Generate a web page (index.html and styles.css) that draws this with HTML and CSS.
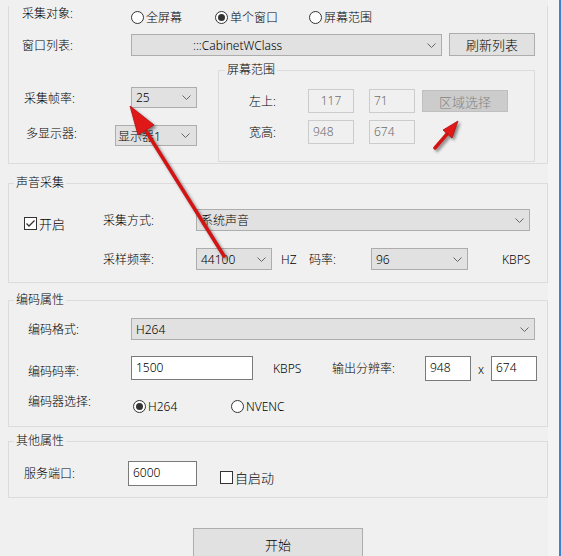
FILE: index.html
```html
<!DOCTYPE html>
<html lang="zh-CN">
<head>
  <meta charset="UTF-8" />
  <title>采集设置</title>
  <link rel="stylesheet" href="styles.css">
</head>
<body>
  <div class="page">
    <div class="main">

      <!-- 视频采集 -->
      <div class="panel-top">
        <div class="row row-target">
          <span class="label label-target">采集对象:</span>
          <span class="opt opt-full"><span class="radio"></span>全屏幕</span>
          <span class="opt opt-window"><span class="radio checked"></span>单个窗口</span>
          <span class="opt"><span class="radio"></span>屏幕范围</span>
        </div>

        <div class="row row-list">
          <span class="label label-list">窗口列表:</span>
          <div class="combo combo-window">
            <span class="combo-text">:::CabinetWClass</span>
            <svg class="chev" viewBox="0 0 9 5"><path d="M0.5 0.5 L4.5 4.5 L8.5 0.5"/></svg>
          </div>
          <button class="btn btn-refresh">刷新列表</button>
        </div>

        <div class="lower">
          <div class="left-col">
            <div class="row row-fps">
              <span class="label label-fps">采集帧率:</span>
              <div class="combo combo-fps">
                <span class="combo-text">25</span>
                <svg class="chev" viewBox="0 0 9 5"><path d="M0.5 0.5 L4.5 4.5 L8.5 0.5"/></svg>
              </div>
            </div>
            <div class="row row-monitor">
              <span class="label label-monitor">多显示器:</span>
              <div class="combo combo-monitor">
                <span class="combo-text">显示器1</span>
                <svg class="chev" viewBox="0 0 9 5"><path d="M0.5 0.5 L4.5 4.5 L8.5 0.5"/></svg>
              </div>
            </div>
          </div>

          <fieldset class="group group-range">
            <legend>屏幕范围</legend>
            <div class="row row-pos">
              <span class="label label-range">左上:</span>
              <span class="field disabled field-center">117</span>
              <span class="field disabled field-gap">71</span>
              <button class="btn btn-disabled">区域选择</button>
            </div>
            <div class="row row-size">
              <span class="label label-range">宽高:</span>
              <span class="field disabled">948</span>
              <span class="field disabled field-gap">674</span>
            </div>
          </fieldset>
        </div>
      </div>

      <!-- 声音采集 -->
      <fieldset class="group group-audio">
        <legend>声音采集</legend>
        <div class="row row-audio1">
          <span class="check-item check-enable">
            <span class="checkbox">
              <svg viewBox="0 0 11 11"><path d="M1.5 5.5 L4 8 L9.5 2.5"/></svg>
            </span>开启
          </span>
          <span class="label label-audio">采集方式:</span>
          <div class="combo combo-source">
            <span class="combo-text">系统声音</span>
            <svg class="chev" viewBox="0 0 9 5"><path d="M0.5 0.5 L4.5 4.5 L8.5 0.5"/></svg>
          </div>
        </div>
        <div class="row row-audio2">
          <span class="label label-audio label-indent">采样频率:</span>
          <div class="combo combo-rate">
            <span class="combo-text">44100</span>
            <svg class="chev" viewBox="0 0 9 5"><path d="M0.5 0.5 L4.5 4.5 L8.5 0.5"/></svg>
          </div>
          <span class="unit unit-hz">HZ</span>
          <span class="label label-bitrate">码率:</span>
          <div class="combo combo-bitrate">
            <span class="combo-text">96</span>
            <svg class="chev" viewBox="0 0 9 5"><path d="M0.5 0.5 L4.5 4.5 L8.5 0.5"/></svg>
          </div>
          <span class="unit unit-kbps">KBPS</span>
        </div>
      </fieldset>

      <!-- 编码属性 -->
      <fieldset class="group group-encode">
        <legend>编码属性</legend>
        <div class="row row-enc1">
          <span class="label label-enc">编码格式:</span>
          <div class="combo combo-format">
            <span class="combo-text">H264</span>
            <svg class="chev" viewBox="0 0 9 5"><path d="M0.5 0.5 L4.5 4.5 L8.5 0.5"/></svg>
          </div>
        </div>
        <div class="row row-enc2">
          <span class="label label-enc label-low">编码码率:</span>
          <span class="field field-bitrate">1500</span>
          <span class="unit unit-enc">KBPS</span>
          <span class="label label-res">输出分辨率:</span>
          <span class="field field-res">948</span>
          <span class="times">x</span>
          <span class="field field-res">674</span>
        </div>
        <div class="row row-enc3">
          <span class="label label-enc label-high">编码器选择:</span>
          <span class="opt opt-h264"><span class="radio checked"></span>H264</span>
          <span class="opt"><span class="radio"></span>NVENC</span>
        </div>
      </fieldset>

      <!-- 其他属性 -->
      <fieldset class="group group-other">
        <legend>其他属性</legend>
        <div class="row row-other">
          <span class="label label-port">服务端口:</span>
          <span class="field field-port">6000</span>
          <span class="check-item check-auto"><span class="checkbox"></span>自启动</span>
        </div>
      </fieldset>

      <button class="btn btn-start">开始</button>
    </div>
    <div class="edge"></div>
  </div>

  <!-- 标注箭头 -->
  <svg class="arrows" viewBox="0 0 561 556">
    <g class="arrow">
      <line x1="224" y1="256" x2="146" y2="131" />
      <polygon points="130,106 154,125 138,135" />
    </g>
    <g class="arrow">
      <line x1="435" y1="148" x2="448" y2="133" />
      <polygon points="458,121 452,138 443,130" />
    </g>
  </svg>
</body>
</html>
```

FILE: styles.css
```css
body {
  margin: 0;
  background: #f0f0f0;
  font-family: "Noto Sans", "Noto Sans CJK SC", sans-serif;
  font-size: 12px;
  font-weight: 300;
  color: #000;
  overflow: hidden;
}

.page {
  display: flex;
  width: 561px;
  height: 556px;
  overflow: hidden;
}

.main {
  width: 540px;
  padding-left: 8px;
  flex-shrink: 0;
}

.edge {
  flex: 1;
  background: #f4f4f4;
  border-right: 2px solid #3b84d4;
}

/* rows and labels */

.row {
  display: flex;
  align-items: center;
}

.label {
  flex-shrink: 0;
  white-space: nowrap;
}

/* top panel */

.panel-top {
  border: 1px solid #dcdcdc;
  border-top: none;
  padding-bottom: 1px;
}

.row-target {
  margin-top: 6px;
  height: 22px;
}

.label-target {
  margin-left: 13px;
  width: 109px;
  margin-bottom: 8px;
}

.opt {
  display: flex;
  align-items: center;
  gap: 2px;
  white-space: nowrap;
}

.opt-full { width: 84px; }
.opt-window { width: 94px; }

.radio {
  width: 11px;
  height: 11px;
  border: 1px solid #333;
  border-radius: 50%;
  background: #fff;
  position: relative;
  flex-shrink: 0;
}

.radio.checked::after {
  content: "";
  position: absolute;
  left: 2px;
  top: 2px;
  width: 7px;
  height: 7px;
  border-radius: 50%;
  background: #333;
}

.row-list {
  margin-top: 6px;
  height: 22px;
}

.label-list {
  margin-left: 13px;
  width: 109px;
}

/* combo boxes */

.combo {
  display: flex;
  align-items: center;
  justify-content: space-between;
  height: 20px;
  padding: 0 5px 0 4px;
  background: #e1e1e1;
  border: 1px solid #adadad;
  flex-shrink: 0;
  box-sizing: content-box;
}

.combo-text {
  white-space: nowrap;
}

.chev {
  width: 9px;
  height: 5px;
  fill: none;
  stroke: #666;
  stroke-width: 1;
}

.combo-window { width: 300px; }
.combo-window .combo-text { margin-left: 57px; }
.combo-fps { width: 55px; height: 19px; }
.combo-monitor { width: 72px; height: 19px; padding-left: 2px; padding-right: 6px; }
.combo-source { width: 323px; }
.combo-rate { width: 65px; }
.combo-bitrate { width: 86px; }
.combo-format { width: 393px; }

/* buttons */

.btn {
  font-family: inherit;
  font-size: 12px;
  font-weight: 300;
  background: #e1e1e1;
  border: 1px solid #adadad;
  color: #000;
  padding: 0;
  cursor: pointer;
}

.btn-refresh {
  width: 86px;
  height: 23px;
  margin-left: 7px;
  font-size: 13px;
  align-self: flex-start;
  margin-top: -1px;
}

.btn-disabled {
  width: 86px;
  height: 22px;
  margin-left: 7px;
  background: #cccccc;
  border-color: #bfbfbf;
  color: #838383;
  font-size: 13px;
}

.btn-start {
  display: block;
  width: 170px;
  height: 32px;
  margin: 30px 0 0 185px;
  font-size: 13px;
}

/* lower area of top panel */

.lower {
  display: flex;
  margin-top: 6px;
}

.left-col {
  width: 209px;
  flex-shrink: 0;
}

.row-fps {
  margin-top: 25px;
  height: 21px;
}

.label-fps {
  margin-left: 15px;
  width: 107px;
}

.row-monitor {
  margin-top: 17px;
  height: 21px;
}

.label-monitor {
  margin-left: 17px;
  width: 89px;
  margin-bottom: 6px;
}

/* group boxes */

.group {
  margin: 0;
  padding: 0;
  border: 1px solid #dcdcdc;
  min-width: 0;
}

.group legend {
  padding: 0 2px;
  margin-left: 5px;
  line-height: 16px;
  font-size: 12px;
}

.group-range {
  width: 317px;
  height: 100px;
  box-sizing: border-box;
}

.group-range legend {
  margin-left: 6px;
}

.row-pos {
  margin-top: 11px;
  height: 24px;
}

.row-size {
  margin-top: 7px;
  height: 24px;
}

.label-range {
  margin-left: 30px;
  width: 59px;
}

/* text fields */

.field {
  display: flex;
  align-items: flex-start;
  box-sizing: border-box;
  height: 24px;
  padding: 2px 4px 0;
  background: #fff;
  border: 1px solid #7a7a7a;
  flex-shrink: 0;
}

.field.disabled {
  width: 46px;
  background: #f0f0f0;
  border-color: #cccccc;
  color: #6d6d6d;
}

.field-center {
  justify-content: center;
}

.field-gap {
  margin-left: 15px;
}

/* audio group */

.group-audio {
  margin-top: 11px;
  padding-bottom: 12px;
}

.row-audio1 {
  margin-top: 18px;
  height: 22px;
}

.row-audio2 {
  margin-top: 17px;
  height: 22px;
}

.check-item {
  display: flex;
  align-items: center;
  gap: 2px;
  white-space: nowrap;
}

.check-enable {
  margin-left: 15px;
  width: 79px;
  margin-top: 6px;
  font-size: 13px;
}

.checkbox {
  width: 11px;
  height: 11px;
  border: 1px solid #333;
  background: #fff;
  display: flex;
  flex-shrink: 0;
}

.checkbox svg {
  width: 11px;
  height: 11px;
  fill: none;
  stroke: #333;
  stroke-width: 1.3;
}

.label-audio {
  width: 93px;
}

.label-indent {
  margin-left: 94px;
}

.unit {
  flex-shrink: 0;
}

.unit-hz {
  margin-left: 9px;
  width: 28px;
}

.label-bitrate {
  width: 62px;
}

.unit-kbps {
  margin-left: 34px;
}

/* encode group */

.group-encode {
  margin-top: 9px;
  padding-bottom: 10px;
}

.row-enc1 {
  margin-top: 10px;
  height: 22px;
}

.row-enc2 {
  margin-top: 16px;
  height: 24px;
}

.row-enc3 {
  margin-top: 16px;
  height: 20px;
}

.label-enc {
  margin-left: 19px;
  width: 103px;
}

.label-low {
  margin-top: 5px;
}

.label-high {
  margin-bottom: 10px;
  width: 105px;
}

.opt-h264 {
  width: 98px;
}

.field-bitrate {
  width: 122px;
}

.unit-enc {
  margin-left: 20px;
  width: 59px;
}

.label-res {
  width: 93px;
}

.field-res {
  width: 46px;
  height: 25px;
}

.times {
  width: 20px;
  text-align: center;
  margin-top: 3px;
}

/* other group */

.group-other {
  margin-top: 6px;
  padding-bottom: 11px;
}

.row-other {
  margin-top: 12px;
  height: 25px;
}

.label-port {
  margin-left: 15px;
  width: 104px;
  margin-bottom: 2px;
}

.field-port {
  width: 69px;
  height: 25px;
}

.check-auto {
  margin-left: 23px;
  margin-top: 8px;
  font-size: 13px;
}

/* annotation arrows */

.arrows {
  position: absolute;
  left: 0;
  top: 0;
  width: 561px;
  height: 556px;
  pointer-events: none;
}

.arrow {
  filter: drop-shadow(2px 2px 1.5px rgba(0, 0, 0, 0.45));
}

.arrow line {
  stroke: #d41414;
  stroke-width: 3.5;
  stroke-linecap: round;
}

.arrow polygon {
  fill: #e01818;
  stroke: #b80e0e;
  stroke-width: 0.8;
  stroke-linejoin: round;
}
```
